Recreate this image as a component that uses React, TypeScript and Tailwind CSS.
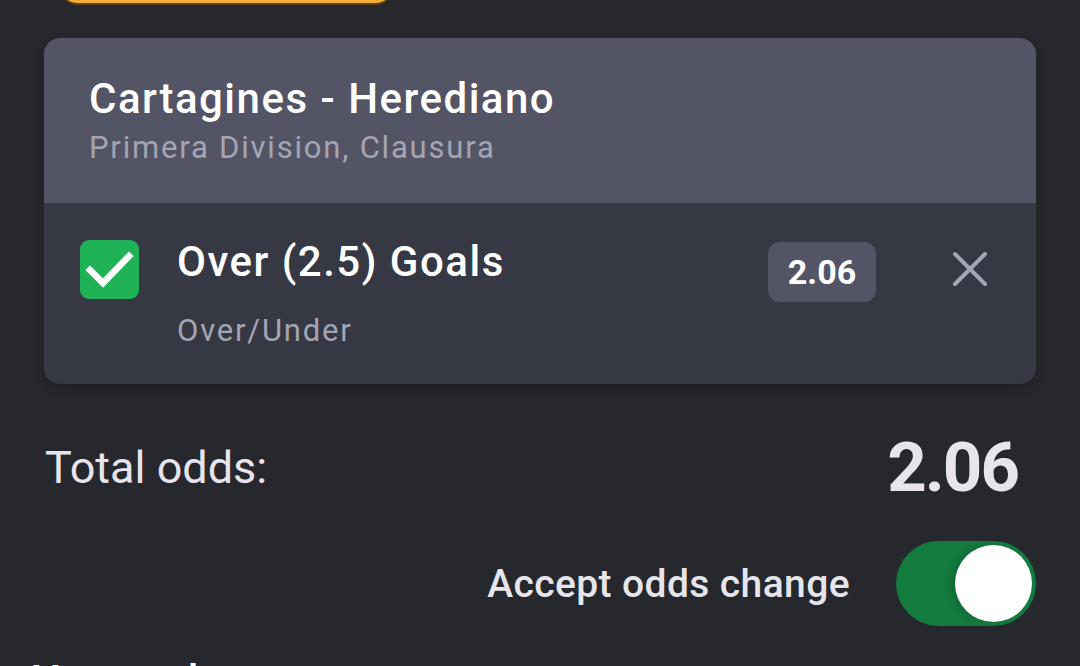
import { X } from "lucide-react";

function CheckBox() {
  return (
    <div className="w-[59px] h-[59px] shrink-0 rounded-[9px] bg-[#1fb257] flex items-center justify-center">
      <svg width="59" height="59" viewBox="0 0 59 59" fill="none">
        <path
          d="M10 30 L23 43 L49 16"
          stroke="#ffffff"
          strokeWidth="6.5"
          strokeLinecap="square"
          strokeLinejoin="miter"
        />
      </svg>
    </div>
  );
}

function Toggle({ on }: { on: boolean }) {
  return (
    <div
      className={
        "w-[140px] h-[85px] rounded-full flex items-center px-[4px] " +
        (on ? "bg-[#137b3e] justify-end" : "bg-[#4a4c57] justify-start")
      }
    >
      <div className="w-[77px] h-[77px] rounded-full bg-white shadow-[-4px_0_6px_rgba(0,0,0,0.15)]" />
    </div>
  );
}

export default function App() {
  return (
    <main className="w-[1080px] h-[666px] overflow-hidden bg-[#26282d] font-['Roboto',sans-serif]">
      {/* yellow button, mostly scrolled off */}
      <div className="ml-[60px] w-[333px] h-[40px] -mt-[35px] rounded-[18px] bg-[#f3ae3d] border-b-[2px] border-[#5e4214]" />

      {/* bet slip card */}
      <div className="mx-[44px] mt-[33px] rounded-[16px] overflow-hidden shadow-[0_4px_10px_rgba(0,0,0,0.25)]">
        <div className="bg-[#535566] pl-[45px] pt-[37px] pb-[37px]">
          <div className="text-[42px] leading-[48px] font-medium tracking-[1.5px] text-white">Cartagines - Herediano</div>
          <div className="mt-[7px] text-[31px] leading-[36px] tracking-[1.8px] text-[#a4a5b2]">Primera Division, Clausura</div>
        </div>
        <div className="bg-[#363844] flex items-start pl-[36px] pr-[36px] pt-[35px] pb-[35px]">
          <div className="mt-[2px]">
            <CheckBox />
          </div>
          <div className="ml-[38px]">
            <div className="text-[42px] leading-[48px] font-medium tracking-[1.5px] text-white">Over (2.5) Goals</div>
            <div className="mt-[27px] text-[31px] leading-[36px] tracking-[1.8px] text-[#a4a5b2]">Over/Under</div>
          </div>
          <div className="ml-auto mt-[4px] h-[60px] flex items-center">
            <div className="w-[108px] h-[60px] rounded-[12px] bg-[#535566] flex items-center justify-center text-[34px] font-bold text-white">
              2.06
            </div>
            <X className="ml-[64px] -mt-[6px] text-[#a4a5b2]" size={60} strokeWidth={1.6} />
          </div>
        </div>
      </div>

      {/* total odds */}
      <div className="mt-[50px] pl-[45px] pr-[62px] flex items-start justify-between">
        <div className="mt-[8px] text-[45px] leading-[52px] text-[#e7e4ed]">Total odds:</div>
        <div className="text-[69px] leading-[68px] font-bold tracking-[-2px] text-[#e7e4ed]">2.06</div>
      </div>

      {/* accept odds change */}
      <div className="mt-[39px] pr-[44px] flex items-center justify-end">
        <span className="text-[39px] leading-[46px] font-medium tracking-[0.4px] text-[#e5e5eb]">Accept odds change</span>
        <div className="ml-[46px]">
          <Toggle on={true} />
        </div>
      </div>

      <div className="mt-[30px] pl-[33px] text-[42px] leading-[50px] font-medium text-white">Your stake</div>
    </main>
  );
}
